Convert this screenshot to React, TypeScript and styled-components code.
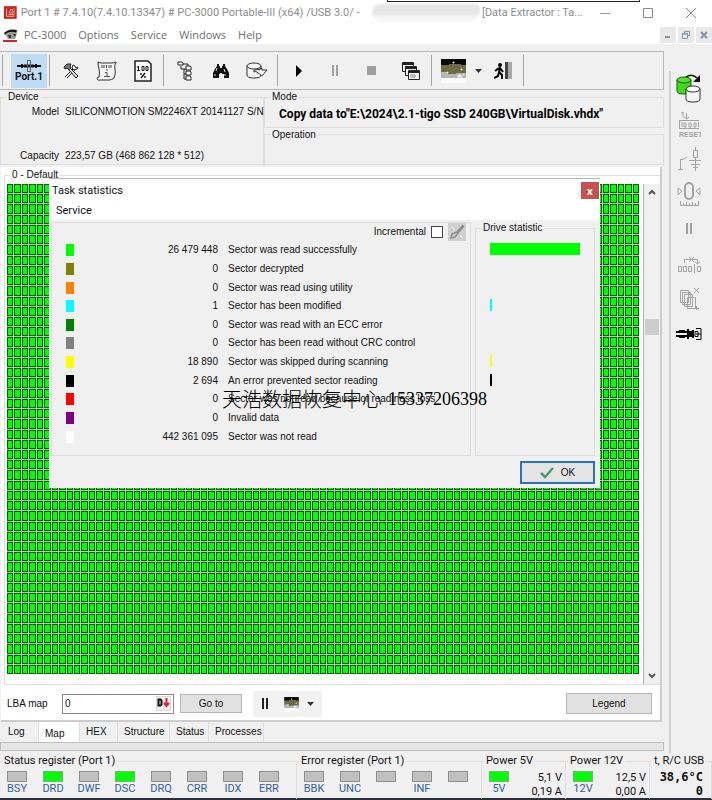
import React from "react";
import styled, { createGlobalStyle } from "styled-components";

const ui = `"Liberation Sans", Arial, sans-serif`;
const humanist = `"Open Sans", "Noto Sans", sans-serif`;
const caption = `Roboto, "Noto Sans", sans-serif`;

const GlobalStyle = createGlobalStyle`
  * { box-sizing: border-box; }
  body { margin: 0; background: #f0f0f0; color: #111; font: 10px/14px ${ui}; }
  button, input { font: inherit; color: inherit; margin: 0; padding: 0; }
  fieldset { margin: 0; padding: 0; min-width: 0; border: 1px solid #dedede; }
  legend { margin-left: 5px; padding: 0 2px; height: 14px; }
`;

const Window = styled.div`
  display: flex;
  flex-direction: column;
  min-height: 100vh;
  border-bottom: 2px solid #2b2f3a;
`;

const TitleBar = styled.header`
  position: relative;
  display: flex;
  align-items: center;
  height: 25px;
  padding-left: 4px;
  background: #fff;
  color: #8c8c8c;
  font: 11px/16px ${caption};
  white-space: nowrap;
`;
const TitleText = styled.span`
  margin-left: 4px;
`;
const Smudge = styled.span`
  width: 128px;
  height: 18px;
  margin: 0 2px 0 12px;
  border-radius: 9px 4px 12px 9px;
  background: linear-gradient(#e6e6e6 0 55%, #f6f6f6 70%);
  filter: blur(1px);
`;
const BehindWindowEdge = styled.span`
  position: absolute;
  top: 0;
  left: 387px;
  width: 253px;
  height: 2px;
  border: 1px solid #222;
  border-top: 0;
`;
const CaptionButtons = styled.div`
  display: flex;
  margin-left: auto;
`;
const CaptionButton = styled.button`
  display: flex;
  align-items: center;
  justify-content: center;
  width: 43px;
  height: 24px;
  border: 0;
  background: none;
`;

const MenuBar = styled.nav`
  display: flex;
  align-items: center;
  height: 19px;
  padding-left: 3px;
  background: #fff;
  color: #6e6e6e;
  font: 11px/16px ${humanist};
`;
const MenuButton = styled.button`
  margin-right: 12px;
  border: 0;
  background: none;
`;
const MdiButtons = styled.div`
  display: flex;
  gap: 2px;
  margin-left: auto;
`;
const MdiButton = styled.button`
  display: flex;
  align-items: center;
  justify-content: center;
  width: 16px;
  height: 16px;
  border: 0;
  background: #e9e9e9;
`;

const Body = styled.div`
  display: flex;
  flex: 1;
`;
const Main = styled.main`
  display: flex;
  flex: 1;
  flex-direction: column;
  min-width: 0;
  padding: 7px 5px 2px 0;
`;

const Toolbar = styled.div`
  display: flex;
  align-items: center;
  height: 39px;
  border: 1px solid #b9b9b9;
  border-left: 0;
`;
const ToolButton = styled.button<{ $active?: boolean; $narrow?: boolean }>`
  display: flex;
  flex-direction: column;
  align-items: center;
  justify-content: center;
  width: ${(p) => (p.$narrow ? 14 : 36)}px;
  height: 34px;
  border: 0;
  background: ${(p) => (p.$active ? "#bfdcf4" : "none")};
`;
const PortLabel = styled.span`
  font: bold 10px/10px Roboto, sans-serif;
  color: #111;
`;
const Separator = styled.span`
  width: 1px;
  height: 31px;
  margin: 0 3px 0 2px;
  background: #a5a5a5;
`;
const Gap = styled.span<{ $w: number }>`
  width: ${(p) => p.$w}px;
`;

const InfoPanels = styled.section`
  display: grid;
  grid-template-columns: 264px 1fr;
  height: 77px;
  padding-bottom: 2px;
`;
const DeviceBox = styled.fieldset`
  display: flex;
  flex-direction: column;
`;
const DeviceList = styled.dl`
  display: flex;
  flex-direction: column;
  justify-content: space-between;
  height: 60px;
  margin: 0;
`;
const DeviceRow = styled.div`
  display: grid;
  grid-template-columns: 58px 1fr;
  gap: 6px;
  line-height: 16px;
  white-space: nowrap;
`;
const DeviceKey = styled.dt`
  text-align: right;
`;
const DeviceValue = styled.dd`
  margin: 0;
`;
const ModeStack = styled.div`
  display: grid;
  grid-template-rows: 1fr 1fr;
  min-width: 0;
`;
const ModeText = styled.div`
  padding: 3px 0 0 14px;
  font: bold 12px/14px ${caption};
  color: #000;
  white-space: nowrap;
`;

const MapPanel = styled.section`
  position: relative;
  display: flex;
  flex: 1;
  flex-direction: column;
  margin: 0 2px 0 1px;
  border-right: 2px solid #cdcdcd;
  border-bottom: 2px solid #cdcdcd;
  background: #fff;
`;
const MapBox = styled.fieldset`
  display: flex;
  flex: 1;
  flex-direction: column;
  margin: 1px 0 0 3px;
  border-right: 0;
`;
const MapRow = styled.div`
  display: flex;
  flex: 1;
  gap: 4px;
  padding: 2px 0 0 2px;
`;
const SectorMap = styled.div`
  display: grid;
  flex: 1;
  grid-template-columns: repeat(85, minmax(0, 1fr));
  grid-auto-rows: 1fr;
  gap: 1px;
  margin-bottom: 10px;
  background: #b9c6b9;
`;
const Sector = styled.i`
  min-height: 5px;
  border: 1px solid #0a5c0a;
  background: #00ff00;
`;
const ScrollBar = styled.div`
  display: flex;
  flex-direction: column;
  align-items: center;
  width: 17px;
  border-left: 1px solid #b0b0b0;
  background: #f0f0f0;
`;
const ScrollButton = styled.button`
  display: flex;
  align-items: center;
  justify-content: center;
  width: 16px;
  height: 16px;
  border: 0;
  background: none;
`;
const ScrollTrack = styled.div`
  flex: 1;
  padding-top: 119px;
`;
const ScrollThumb = styled.div`
  width: 14px;
  height: 16px;
  background: #cdcdcd;
`;

const MapControls = styled.div`
  display: flex;
  align-items: center;
  height: 35px;
  padding: 2px 8px 0 6px;
`;
const LbaLabel = styled.label`
  width: 55px;
`;
const LbaField = styled.div`
  display: flex;
  align-items: center;
  width: 112px;
  height: 20px;
  padding: 0 2px;
  border: 1px solid #8a8a8a;
  background: #fff;
`;
const LbaInput = styled.input`
  flex: 1;
  min-width: 0;
  border: 0;
  outline: 0;
  background: none;
`;
const RadixButton = styled.button`
  width: 15px;
  height: 15px;
  border: 1px solid #dadada;
  background: #f0f0f0;
`;
const PushButton = styled.button<{ $w: number; $right?: boolean }>`
  width: ${(p) => p.$w}px;
  height: ${(p) => (p.$right ? 21 : 19)}px;
  margin-left: ${(p) => (p.$right ? "auto" : "6px")};
  border: 1px solid #b4b4b4;
  background: #e1e1e1;
`;
const MiniBar = styled.div`
  display: flex;
  align-items: center;
  gap: 15px;
  height: 26px;
  margin-left: 11px;
  padding: 0 8px;
  background: #f2f2f2;
`;
const MiniButton = styled.button`
  display: flex;
  align-items: center;
  gap: 8px;
  border: 0;
  background: none;
`;

const Tabs = styled.div`
  display: flex;
  height: 20px;
  padding-left: 2px;
`;
const Tab = styled.button<{ $w: number; $active?: boolean }>`
  width: ${(p) => p.$w}px;
  padding: ${(p) => (p.$active ? 3 : 0)}px 0 0 6px;
  text-align: left;
  border: 0;
  border-right: 1px solid #dedede;
  background: ${(p) => (p.$active ? "#fff" : "none")};
`;
const ProgressLine = styled.div`
  height: 9px;
  border: 1px solid #bfbfbf;
  background: #e6e6e6;
`;

const SideBar = styled.aside`
  display: flex;
  flex-direction: column;
  width: 43px;
  margin-top: 27px;
  border-left: 2px solid #cfcfcf;
`;
const SideButton = styled.button`
  display: flex;
  align-items: center;
  justify-content: center;
  width: 36px;
  height: 35px;
  border: 0;
  background: none;
`;

const Dialog = styled.section`
  position: absolute;
  top: 11px;
  left: 48px;
  right: 60px;
  height: 310px;
  border-top: 1px solid #b5b5b5;
  background: #f0f0f0;
`;
const DialogTitle = styled.header`
  display: flex;
  align-items: center;
  justify-content: space-between;
  height: 23px;
  padding: 0 1px 0 3px;
  background: #fff;
  color: #111;
  font: 11px/16px ${caption};
`;
const DialogMenu = styled.nav`
  height: 18px;
  padding: 2px 0 0 7px;
  background: #fff;
  font: 11px/14px ${caption};
`;
const CloseButton = styled.button`
  width: 18px;
  height: 17px;
  border: 0;
  background: #c75050;
  color: #fff;
  font: bold 10px/14px ${humanist};
`;
const DialogBody = styled.div`
  display: grid;
  grid-template-columns: 1fr 120px;
  gap: 4px;
  height: 236px;
  padding: 0 5px 0 2px;
`;
const StatBox = styled.div`
  margin-top: 2px;
  border: 1px solid #dedede;
`;
const IncrementalRow = styled.label`
  display: flex;
  align-items: center;
  justify-content: flex-end;
  height: 18px;
  padding-right: 4px;
`;
const Check = styled.input`
  appearance: none;
  width: 12px;
  height: 12px;
  margin: 0 5px;
  border: 1px solid #444;
  background: #fff;
`;
const BrushButton = styled.button`
  display: flex;
  width: 18px;
  height: 18px;
  border: 0;
  background: #cfcfcf;
`;
const StatTable = styled.table`
  width: 100%;
  height: 205px;
  border-collapse: collapse;
`;
const StatCell = styled.td<{ $w?: number; $right?: boolean }>`
  width: ${(p) => (p.$w ? `${p.$w}px` : "auto")};
  padding: 0 0 0 ${(p) => (p.$w === 26 ? 14 : p.$right ? 0 : 10)}px;
  text-align: ${(p) => (p.$right ? "right" : "left")};
  white-space: nowrap;
`;
const Swatch = styled.span<{ $color: string }>`
  display: block;
  width: 8px;
  height: 12px;
  background: ${(p) => p.$color};
`;
const DriveBox = styled.fieldset`
  margin-top: 1px;
`;
const Bars = styled.div`
  display: grid;
  grid-auto-rows: 1fr;
  align-items: center;
  height: 205px;
  margin-top: 5px;
  padding: 0 14px;
`;
const Bar = styled.span<{ $color: string; $size: "full" | "tick" | "none" }>`
  width: ${(p) => (p.$size === "full" ? "100%" : p.$size === "tick" ? "2px" : "0")};
  height: 12px;
  background: ${(p) => p.$color};
`;
const DialogFooter = styled.footer`
  display: flex;
  justify-content: flex-end;
  padding: 5px 5px 0 0;
`;
const OkButton = styled.button`
  display: flex;
  align-items: center;
  justify-content: center;
  gap: 6px;
  width: 75px;
  height: 23px;
  border: 2px solid #2a73b8;
  background: #e4e4e4;
`;
const Watermark = styled.div`
  position: absolute;
  top: 208px;
  left: 173px;
  display: flex;
  align-items: center;
  gap: 6px;
  color: #000;
  white-space: nowrap;
  font: 18px/24px "Liberation Serif", serif;
`;
const WatermarkName = styled.span`
  font: 300 20px/24px "Noto Sans CJK SC", sans-serif;
`;

const StatusBar = styled.footer`
  display: grid;
  grid-template-columns: 297fr 185fr 84fr 84fr 62fr;
  height: 45px;
  padding-top: 1px;
  font: 11px/14px ${caption};
`;
const StatusGroup = styled.fieldset`
  border-width: 1px 1px 0 0;
  white-space: nowrap;
  legend { margin-left: 2px; }
`;
const Leds = styled.div<{ $n: number }>`
  display: grid;
  grid-template-columns: repeat(${(p) => p.$n}, 36px);
  padding: 3px 0 0 7px;
`;
const LedItem = styled.div`
  display: flex;
  flex-direction: column;
  align-items: center;
  width: 20px;
  color: #30609c;
`;
const Led = styled.span<{ $on?: boolean }>`
  width: 20px;
  height: 11px;
  border: 1px solid ${(p) => (p.$on ? "#7fae7f" : "#8f8f8f")};
  background: ${(p) => (p.$on ? "#00ff00" : "#c0c0c0")};
`;
const Power = styled.div`
  display: flex;
  justify-content: space-between;
  padding: 3px 3px 0 7px;
`;
const Readings = styled.div`
  text-align: right;
`;
const Temperature = styled.div`
  padding: 2px 8px 0 0;
  text-align: right;
  font: bold 12px/14px "DejaVu Sans Mono", monospace;
  color: #111;
`;

const sectors = Array.from({ length: 85 * 48 }, (_, i) => i);

type Row = { color: string; count: string; text: string; bar: "full" | "tick" | "none" };
const rows: Row[] = [
  { color: "#00ff00", count: "26 479 448", text: "Sector was read successfully", bar: "full" },
  { color: "#808000", count: "0", text: "Sector decrypted", bar: "none" },
  { color: "#ff8000", count: "0", text: "Sector was read using utility", bar: "none" },
  { color: "#00ffff", count: "1", text: "Sector has been modified", bar: "tick" },
  { color: "#008000", count: "0", text: "Sector was read with an ECC error", bar: "none" },
  { color: "#808080", count: "0", text: "Sector has been read without CRC control", bar: "none" },
  { color: "#ffff00", count: "18 890", text: "Sector was skipped during scanning", bar: "tick" },
  { color: "#000000", count: "2 694", text: "An error prevented sector reading", bar: "tick" },
  { color: "#ff0000", count: "0", text: "Sector was not read because of readiness loss", bar: "none" },
  { color: "#800080", count: "0", text: "Invalid data", bar: "none" },
  { color: "#ffffff", count: "442 361 095", text: "Sector was not read", bar: "none" },
];

const AppIcon = () => (
  <svg width="15" height="15" viewBox="0 0 15 15">
    <rect width="15" height="15" fill="#c4271d" />
    <path d="M3 3v9h9M5 10h7M6 8l2-4h2l1 4z" stroke="#f3c9c4" fill="none" />
    <path d="M12 2v9" stroke="#e88" />
  </svg>
);
const ChildIcon = () => (
  <svg width="15" height="14" viewBox="0 0 15 14">
    <path d="M1 5q5-5 13-3l-1 4q-5-3-11 1z" fill="#111" />
    <path d="M2 6l3 5h7l2-6q-6-3-12 1z" fill="#9a9a9a" />
    <path d="M5 7h3v3H6zM10 6h3l-1 3z" fill="#333" />
    <path d="M0 13h14" stroke="#d3202c" strokeWidth="2" />
  </svg>
);
const PortIcon = () => (
  <svg width="26" height="12" viewBox="0 0 26 12">
    <path d="M1 6h24M6 4v4M20 4v4" stroke="#111" strokeWidth="2" />
    <path d="M8 6h10" stroke="#111" strokeWidth="3" />
    <path d="M11.500 0v12M14.500 0v12M11 .5h4M11 11.500h4" stroke="#5b6770" fill="none" />
  </svg>
);
const ToolsIcon = () => (
  <svg width="16" height="16" viewBox="0 0 16 16" fill="none" stroke="#222">
    <path d="M2 14L11 5M4 15L13 6" />
    <path d="M10 2l-1 3 2 2 3-1 1-2-2 1-1-2z" fill="#fff" />
    <path d="M1 4l3-3h4l-1 2 1 2-2 2-2-2-2 1z" fill="#777" />
    <path d="M6 7l7 8 2-2-7-7" fill="#ddd" />
  </svg>
);
const ScrollIcon = () => (
  <svg width="22" height="22" viewBox="0 0 22 22">
    <path d="M2 2q2 1 4 1h9q3 0 5-1-2 3-1 7 1 5-1 9-2 2-5 2H5q-3 1-4-1 0-2 2-2 1-4 0-8-1-4-1-7z" fill="#f4f4f4" stroke="#333" />
    <path d="M6 5v3M8 5v3M10.500 5v3M13 5v3M15 5v3" stroke="#444" />
    <path d="M10 10h2M9 12.500h2v4M8 16.500h6" stroke="#555" fill="none" />
  </svg>
);
const PercentIcon = () => (
  <svg width="18" height="22" viewBox="0 0 18 22">
    <path d="M1 1h13l3 3v17H1z" fill="#fafafa" stroke="#222" strokeWidth="1.500" />
    <path d="M4.500 6v4M3 7h2M3 10.500h3" stroke="#111" />
    <path d="M8 6.500h2v4H8zM12 6.500h2v4h-2z" fill="none" stroke="#111" />
    <path d="M7 18l4-5M7 13v2M11 16v2" stroke="#111" strokeWidth="1.400" />
  </svg>
);
const TreeIcon = () => (
  <svg width="16" height="20" viewBox="0 0 16 20" fill="#fff" stroke="#222">
    <path d="M4 5v3h5M7 8v10h3M7 13h3M6 3h5v3" fill="none" />
    <path d="M1 1h4l1 1v2H1zM9 5h4l1 1v3H9zM9 10h4l1 1v3H9zM9 15h4l1 1v3H9z" />
  </svg>
);
const BinocularsIcon = () => (
  <svg width="16" height="14" viewBox="0 0 16 14">
    <path d="M4 0h2v2h1v2h2V2h1V0h2v2l2 3 2 4v5h-5v-4H9V9H7v1H6v4H0V9l2-4 2-3z" fill="#111" />
    <path d="M3 7l1-3M11 5l1 3M2 10v2M12 10v2" stroke="#ddd" />
  </svg>
);
const DatabaseIcon = () => (
  <svg width="22" height="18" viewBox="0 0 22 18" fill="#f4f4f4" stroke="#333">
    <path d="M1 4v9q0 3 7 3t7-3V4" />
    <ellipse cx="8" cy="4" rx="7" ry="3" />
    <path d="M8 8q5-1 6 0V6.500h2V8h5l-5 6-5-4q-2-1-3 0z" />
  </svg>
);
const PlayIcon = () => (
  <svg width="8" height="12" viewBox="0 0 8 12"><path d="M1 0l6 6-6 6z" fill="#000" /></svg>
);
const PauseIcon = ({ color = "#a0a0a0" }: { color?: string }) => (
  <svg width="8" height="11" viewBox="0 0 8 11"><path d="M1 0h2v11H1zM5 0h2v11H5z" fill={color} /></svg>
);
const StopIcon = () => (
  <svg width="9" height="9" viewBox="0 0 9 9"><rect width="9" height="9" fill="#9f9f9f" /></svg>
);
const WindowsIcon = () => (
  <svg width="20" height="20" viewBox="0 0 20 20" fill="#f0f0f0" stroke="#222">
    <path d="M1.500 1.500h11v9h-11z" />
    <path d="M1 3h12" strokeWidth="2" />
    <path d="M4.500 5.500h11v9h-11z" />
    <path d="M4 7h12" strokeWidth="2" />
    <path d="M7.500 9.500h11v9h-11z" />
    <path d="M7 11h12" strokeWidth="2" />
    <path d="M10 14h4v2h-4z" fill="#fff" stroke="#888" />
  </svg>
);
const PictureIcon = ({ w = 25 }: { w?: number }) => (
  <svg width={w} height={w - 1} viewBox="0 0 25 24">
    <rect width="25" height="7" fill="#080808" />
    <path d="M0 6h8v-1h12v1h5v10H0z" fill="#6c6b44" />
    <path d="M0 13h7v2h8v-1h10v6H0z" fill="#b6b6b2" />
    <path d="M0 19h25v5H0z" fill="#fafafa" />
    <path d="M12 3h1v1h-1zM6 13h1v1H6zM20 10h1v1h-1zM17 16h3v2h-3zM20 19l3-4" fill="#fff" stroke="#e5e5e5" />
  </svg>
);
const DownIcon = () => (
  <svg width="7" height="4" viewBox="0 0 7 4"><path d="M0 0h7L3.500 4z" fill="#333" /></svg>
);
const ExitIcon = () => (
  <svg width="18" height="18" viewBox="0 0 18 18">
    <rect x="11" width="3" height="17" fill="#444" />
    <rect x="14" width="4" height="17" fill="#a9a9a9" />
    <circle cx="6" cy="3" r="2" fill="#000" />
    <path d="M6 5L5 11M5 6L1 9M6 6l3 4M5 10l3 3v4M5 10l-1 4-4 2" stroke="#000" strokeWidth="2" fill="none" />
  </svg>
);
const Chevron = ({ down }: { down?: boolean }) => (
  <svg width="8" height="6" viewBox="0 0 8 6">
    <path d={down ? "M1 1l3 3 3-3" : "M1 5l3-3 3 3"} fill="none" stroke="#555" strokeWidth="2" />
  </svg>
);

const gray = "#a3a3a3";
const SwapIcon = () => (
  <svg width="26" height="30" viewBox="0 0 26 30">
    <path d="M1 6v11q0 3 7 3t7-3V6" fill="#3fdc10" stroke="#175c0a" />
    <ellipse cx="8" cy="6" rx="7" ry="3" fill="#52e030" stroke="#175c0a" />
    <path d="M10 15v10q0 3 7 3t7-3V15" fill="#f4f4f4" stroke="#333" />
    <ellipse cx="17" cy="15" rx="7" ry="3" fill="#fff" stroke="#333" />
    <path d="M10 3q6-4 11 1" fill="none" stroke="#111" strokeWidth="1.500" />
    <path d="M24 1v7h-7z" fill="#111" />
  </svg>
);
const ResetIcon = () => (
  <svg width="24" height="26" viewBox="0 0 24 26" fill="none" stroke={gray}>
    <path d="M4 2l2-1v5M9.500 2v6M7 6l2.500 2L12 6M2 9.500h20M2 17.500h20M2.500 9v9M7 12h2v4H7zM12 12h2v4h-2zM17 12h2v4h-2zM5 11v5M21.500 11v5" />
    <text x="2" y="26" fontSize="7" fontFamily="Liberation Sans" fontWeight="bold" fill={gray} stroke="none">RESET</text>
  </svg>
);
const CircuitIcon = () => (
  <svg width="24" height="24" viewBox="0 0 24 24" fill="none" stroke={gray}>
    <path d="M1 22.500h5M3.500 23V12.500H6L10 10M18.500 0v3M16.500 3.500h4v7h-4zM18.500 10v14M12 13.500h12M14 17.500h9M16 20.500h5" />
  </svg>
);
const ZeroIcon = () => (
  <svg width="24" height="26" viewBox="0 0 24 26" fill="none" stroke={gray}>
    <path d="M1 7l4 3-4 4zM23 7l-4 3 4 4zM3.500 20v4.500h18V20M6.500 22v2M9.500 21v3M12.500 22v2M15.500 21v3M18.500 22v2" />
    <rect x="8" y="2" width="8" height="16" rx="4" strokeWidth="2" />
  </svg>
);
const BlocksIcon = () => (
  <svg width="24" height="18" viewBox="0 0 24 18" fill="none" stroke={gray}>
    <path d="M1.500 11.500h3v5h-3zM6.500 11.500h3v5h-3zM11.500 11.500h3v5h-3zM17.500 9v9M20.500 11.500h3v5h-3zM7.500 8V4.500h13V9M18 7l2.500 2L23 7M12 2l5 5M17 2l-5 5" />
  </svg>
);
const CopiesIcon = () => (
  <svg width="24" height="24" viewBox="0 0 24 24" fill="#f0f0f0" stroke={gray}>
    <path d="M3.500 3.500h8v12h-8zM5.500 5.500h8v12h-8zM7.500 7.500h8v12h-8zM10.500 10.500h8v11h-8zM16 21.500h6M19.500 19v4M17 1l5 5M22 1l-5 5" />
  </svg>
);
const ConnectorIcon = () => (
  <svg width="26" height="14" viewBox="0 0 26 14" fill="none" stroke="#000">
    <path d="M0 5h18M0 9h18" strokeWidth="2" />
    <path d="M3 4h6M3 10h6" strokeWidth="2" />
    <path d="M12 2v10M17 3v8M12 7h6" strokeWidth="2" />
    <path d="M19 4.500h3v5h-3zM20 7h5M20 1.500h5v11h-5" />
  </svg>
);

const statusLeds = ["BSY", "DRD", "DWF", "DSC", "DRQ", "CRR", "IDX", "ERR"];
const errorLeds = ["BBK", "UNC", "", "INF", ""];

const LedGroup = ({ title, names }: { title: string; names: string[] }) => (
  <StatusGroup>
    <legend>{title}</legend>
    <Leds $n={names.length}>
      {names.map((n, i) => (
        <LedItem key={i}>
          <Led $on={n === "DRD" || n === "DSC"} />
          {n}
        </LedItem>
      ))}
    </Leds>
  </StatusGroup>
);

const PowerGroup = ({ name, volts, amps }: { name: string; volts: string; amps: string }) => (
  <StatusGroup>
    <legend>Power {name}</legend>
    <Power>
      <LedItem>
        <Led $on />
        {name}
      </LedItem>
      <Readings>
        {volts}
        <br />
        {amps}
      </Readings>
    </Power>
  </StatusGroup>
);

const StatisticsDialog = () => (
  <Dialog role="dialog" aria-label="Task statistics">
    <DialogTitle>
      Task statistics
      <CloseButton aria-label="Close">x</CloseButton>
    </DialogTitle>
    <DialogMenu>
      <MenuButton>Service</MenuButton>
    </DialogMenu>
    <DialogBody>
      <StatBox>
        <IncrementalRow>
          Incremental
          <Check type="checkbox" />
          <BrushButton aria-label="Clear">
            <svg width="18" height="18" viewBox="0 0 18 18" fill="none" stroke="#8e8e8e">
              <path d="M15 2l-6 7M16 3l-6 7M9 9l-5 2-1 4 4-1 3-4" strokeWidth="1.500" />
              <path d="M4 4l3 3M12 12l2 3" stroke="#f4f4f4" />
            </svg>
          </BrushButton>
        </IncrementalRow>
        <StatTable>
          <tbody>
            {rows.map((r) => (
              <tr key={r.text}>
                <StatCell $w={26}>
                  <Swatch $color={r.color} />
                </StatCell>
                <StatCell $w={140} $right>
                  {r.count}
                </StatCell>
                <StatCell>{r.text}</StatCell>
              </tr>
            ))}
          </tbody>
        </StatTable>
      </StatBox>
      <DriveBox>
        <legend>Drive statistic</legend>
        <Bars>
          {rows.map((r) => (
            <Bar key={r.text} $color={r.color} $size={r.bar} />
          ))}
        </Bars>
      </DriveBox>
    </DialogBody>
    <DialogFooter>
      <OkButton>
        <svg width="15" height="12" viewBox="0 0 15 12">
          <path d="M1 6l4 4 8-9" fill="none" stroke="#4a9a78" strokeWidth="2.500" />
        </svg>
        OK
      </OkButton>
    </DialogFooter>
    <Watermark>
      <WatermarkName>天浩数据恢复中心</WatermarkName>
      15337206398
    </Watermark>
  </Dialog>
);

export default function App() {
  return (
    <Window>
      <GlobalStyle />
      <TitleBar>
        <AppIcon />
        <TitleText>Port 1 # 7.4.10(7.4.10.13347) # PC-3000 Portable-III (x64) /USB 3.0/ -</TitleText>
        <Smudge />
        <span>[Data Extractor : Ta...</span>
        <BehindWindowEdge />
        <CaptionButtons>
          <CaptionButton aria-label="Minimize">
            <svg width="10" height="10" viewBox="0 0 10 10"><path d="M0 5.500h10" stroke="#999" /></svg>
          </CaptionButton>
          <CaptionButton aria-label="Maximize">
            <svg width="10" height="10" viewBox="0 0 10 10"><path d="M.5.5h9v9h-9z" fill="none" stroke="#888" /></svg>
          </CaptionButton>
          <CaptionButton aria-label="Close window">
            <svg width="10" height="10" viewBox="0 0 10 10"><path d="M0 0l10 10M10 0L0 10" stroke="#888" /></svg>
          </CaptionButton>
        </CaptionButtons>
      </TitleBar>
      <MenuBar>
        <ChildIcon />
        <Gap $w={6} />
        {["PC-3000", "Options", "Service", "Windows", "Help"].map((m) => (
          <MenuButton key={m}>{m}</MenuButton>
        ))}
        <MdiButtons>
          <MdiButton aria-label="Minimize child">
            <svg width="8" height="8" viewBox="0 0 8 8"><path d="M1 6h5" stroke="#8593a5" strokeWidth="2" /></svg>
          </MdiButton>
          <MdiButton aria-label="Restore child">
            <svg width="8" height="8" viewBox="0 0 8 8" fill="none" stroke="#8593a5"><path d="M2.500 2V.5h5v4H6M.5 2.500h5v5h-5zM0 3h6" /></svg>
          </MdiButton>
          <MdiButton aria-label="Close child">
            <svg width="8" height="8" viewBox="0 0 8 8"><path d="M1 1l6 6M7 1L1 7" stroke="#8593a5" strokeWidth="2" /></svg>
          </MdiButton>
        </MdiButtons>
      </MenuBar>
      <Body>
        <Main>
          <Toolbar>
            <Separator />
            <Gap $w={5} />
            <ToolButton $active>
              <PortIcon />
              <PortLabel>Port.1</PortLabel>
            </ToolButton>
            <Separator />
            <ToolButton aria-label="Utilities"><ToolsIcon /></ToolButton>
            <ToolButton aria-label="Information"><ScrollIcon /></ToolButton>
            <ToolButton aria-label="Percent"><PercentIcon /></ToolButton>
            <Separator />
            <ToolButton aria-label="Tree"><TreeIcon /></ToolButton>
            <ToolButton aria-label="Search"><BinocularsIcon /></ToolButton>
            <ToolButton aria-label="Export"><DatabaseIcon /></ToolButton>
            <Separator />
            <ToolButton aria-label="Start"><PlayIcon /></ToolButton>
            <ToolButton aria-label="Pause"><PauseIcon /></ToolButton>
            <ToolButton aria-label="Stop"><StopIcon /></ToolButton>
            <Gap $w={4} />
            <ToolButton aria-label="Windows list"><WindowsIcon /></ToolButton>
            <Separator />
            <ToolButton aria-label="Map view"><PictureIcon /></ToolButton>
            <ToolButton aria-label="Map view options" $narrow><DownIcon /></ToolButton>
            <ToolButton aria-label="Exit"><ExitIcon /></ToolButton>
            <Separator />
          </Toolbar>
          <InfoPanels>
            <DeviceBox>
              <legend>Device</legend>
              <DeviceList>
                <DeviceRow>
                  <DeviceKey>Model</DeviceKey>
                  <DeviceValue>SILICONMOTION SM2246XT 20141127 S/N</DeviceValue>
                </DeviceRow>
                <DeviceRow>
                  <DeviceKey>Capacity</DeviceKey>
                  <DeviceValue>223,57 GB (468 862 128 * 512)</DeviceValue>
                </DeviceRow>
              </DeviceList>
            </DeviceBox>
            <ModeStack>
              <fieldset>
                <legend>Mode</legend>
                <ModeText>Copy data to"E:\2024\2.1-tigo SSD 240GB\VirtualDisk.vhdx"</ModeText>
              </fieldset>
              <fieldset>
                <legend>Operation</legend>
              </fieldset>
            </ModeStack>
          </InfoPanels>
          <MapPanel>
            <MapBox>
              <legend>0 - Default</legend>
              <MapRow>
                <SectorMap>
                  {sectors.map((i) => (
                    <Sector key={i} />
                  ))}
                </SectorMap>
                <ScrollBar>
                  <ScrollButton aria-label="Scroll up"><Chevron /></ScrollButton>
                  <ScrollTrack>
                    <ScrollThumb />
                  </ScrollTrack>
                  <ScrollButton aria-label="Scroll down"><Chevron down /></ScrollButton>
                </ScrollBar>
              </MapRow>
            </MapBox>
            <MapControls>
              <LbaLabel htmlFor="lba">LBA map</LbaLabel>
              <LbaField>
                <LbaInput id="lba" defaultValue="0" />
                <RadixButton aria-label="Decimal">
                  <svg width="13" height="11" viewBox="0 0 13 11">
                    <path d="M1.500 2.500h2l1 1v4l-1 1h-2z" fill="none" stroke="#111" strokeWidth="2" />
                    <path d="M9.500 1v7M7 6l2.500 3L12 6" stroke="#e02030" strokeWidth="2" fill="none" />
                  </svg>
                </RadixButton>
              </LbaField>
              <PushButton $w={62}>Go to</PushButton>
              <MiniBar>
                <MiniButton aria-label="Pause map"><PauseIcon color="#222" /></MiniButton>
                <MiniButton aria-label="Map mode">
                  <PictureIcon w={15} />
                  <DownIcon />
                </MiniButton>
              </MiniBar>
              <PushButton $w={86} $right>Legend</PushButton>
            </MapControls>
            <StatisticsDialog />
          </MapPanel>
          <Tabs role="tablist">
            <Tab role="tab" $w={37}>Log</Tab>
            <Tab role="tab" $w={41} $active>Map</Tab>
            <Tab role="tab" $w={38}>HEX</Tab>
            <Tab role="tab" $w={52}>Structure</Tab>
            <Tab role="tab" $w={39}>Status</Tab>
            <Tab role="tab" $w={55}>Processes</Tab>
          </Tabs>
          <ProgressLine />
        </Main>
        <SideBar>
          <SideButton aria-label="Swap"><SwapIcon /></SideButton>
          <SideButton aria-label="Reset"><ResetIcon /></SideButton>
          <SideButton aria-label="Circuit"><CircuitIcon /></SideButton>
          <SideButton aria-label="Zero"><ZeroIcon /></SideButton>
          <SideButton aria-label="Pause device"><PauseIcon /></SideButton>
          <SideButton aria-label="Blocks"><BlocksIcon /></SideButton>
          <SideButton aria-label="Copies"><CopiesIcon /></SideButton>
          <SideButton aria-label="Connector"><ConnectorIcon /></SideButton>
        </SideBar>
      </Body>
      <StatusBar>
        <LedGroup title="Status register (Port 1)" names={statusLeds} />
        <LedGroup title="Error register (Port 1)" names={errorLeds} />
        <PowerGroup name="5V" volts="5,1 V" amps="0,19 A" />
        <PowerGroup name="12V" volts="12,5 V" amps="0,00 A" />
        <StatusGroup>
          <legend>t, R/C USB</legend>
          <Temperature>
            38,6°C
            <br />0
          </Temperature>
        </StatusGroup>
      </StatusBar>
    </Window>
  );
}
